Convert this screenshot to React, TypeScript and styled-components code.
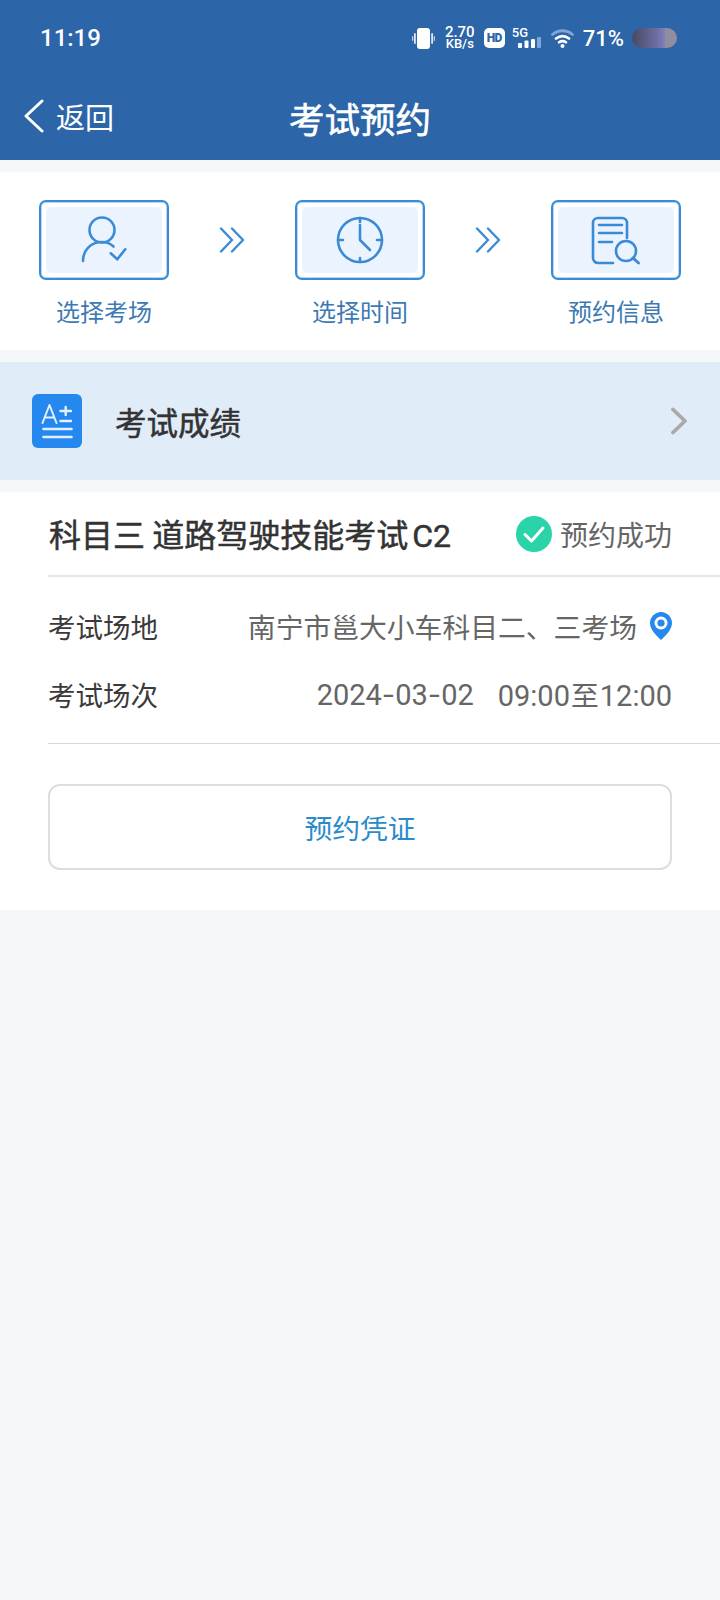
import styled, { createGlobalStyle } from 'styled-components';

const GlobalStyle = createGlobalStyle`
  html, body {
    margin: 0;
    padding: 0;
    background: #f4f8fa;
  }
  * {
    box-sizing: border-box;
  }
  body {
    font-family: "Noto Sans CJK SC", "Noto Sans", sans-serif;
  }
`;

const Page = styled.div`
  width: 720px;
  height: 1600px;
  background: #f4f8fa;
  overflow: hidden;
`;

const Header = styled.header`
  height: 160px;
  background: #2c65a8;
  color: #fff;
`;

const StatusBar = styled.div`
  height: 76px;
  padding: 0 43px 0 40px;
  display: flex;
  align-items: center;
`;

const Clock = styled.span`
  font-family: "Roboto", sans-serif;
  font-size: 24px;
  font-weight: 500;
  flex: 1;
`;

const StatusIcons = styled.div`
  display: flex;
  align-items: center;
`;

const Speed = styled.div`
  font-family: "Roboto", sans-serif;
  font-weight: 500;
  width: 30px;
  margin: 0 9px 0 10px;
  text-align: center;
  line-height: 12px;
  display: flex;
  flex-direction: column;
  align-items: center;
  white-space: nowrap;
`;

const SpeedValue = styled.span`
  font-size: 15px;
`;

const SpeedUnit = styled.span`
  font-size: 13px;
`;

const HdBadge = styled.span`
  width: 21px;
  height: 20px;
  border-radius: 5px;
  background: #fff;
  color: #2c65a8;
  font-family: "Roboto", sans-serif;
  font-size: 12px;
  font-weight: 900;
  line-height: 20px;
  text-align: center;
  letter-spacing: -0.5px;
`;

const Signal = styled.div`
  width: 29px;
  height: 20px;
  margin: 0 10px 0 7px;
  position: relative;
`;

const SignalLabel = styled.span`
  position: absolute;
  left: 0;
  top: -2px;
  font-family: "Roboto", sans-serif;
  font-size: 13px;
  font-weight: 500;
  line-height: 14px;
`;

const SignalBars = styled.svg`
  position: absolute;
  left: 0;
  bottom: 0;
`;

const Battery = styled.span`
  font-family: "Roboto", sans-serif;
  font-size: 22px;
  font-weight: 500;
  margin: 0 8px 0 9px;
`;

const BatteryBar = styled.div`
  width: 45px;
  height: 20px;
  border-radius: 10px;
  overflow: hidden;
  background: linear-gradient(90deg, #474a63 0%, #6a6a9c 50%, #7f7dbd 72%, #8f8d9e 74%);
`;

const NavBar = styled.nav`
  height: 84px;
  position: relative;
  display: flex;
  align-items: center;
  justify-content: center;
`;

const BackLink = styled.div`
  position: absolute;
  left: 24px;
  top: 22px;
  display: flex;
  align-items: center;
  gap: 12px;
  font-size: 29px;
  line-height: 36px;
`;

const NavTitle = styled.h1`
  margin: 0;
  font-size: 35.5px;
  font-weight: 400;
  line-height: 48px;
  -webkit-text-stroke: 0.6px #fff;
`;

const Steps = styled.section`
  margin-top: 12px;
  height: 178px;
  padding: 28px 39px 0;
  background: #fff;
  display: flex;
  justify-content: space-between;
`;

const Step = styled.div`
  width: 130px;
  display: flex;
  flex-direction: column;
  align-items: center;
`;

const StepFrame = styled.div`
  width: 130px;
  height: 80px;
  padding: 5px;
  border: 2px solid #3b8ad6;
  border-radius: 7px;
  box-shadow: inset 0 0 0 1px rgba(59, 138, 214, 0.35);
`;

const StepInner = styled.div`
  height: 100%;
  border-radius: 5px;
  background: #eaf3fe;
  display: flex;
  align-items: center;
  justify-content: center;
`;

const StepLabel = styled.span`
  margin-top: 14px;
  font-size: 24px;
  line-height: 34px;
  color: #3d79b3;
`;

const StepArrow = styled.div`
  height: 80px;
  display: flex;
  align-items: center;
`;

const ScoreBanner = styled.section`
  margin-top: 12px;
  height: 118px;
  padding: 0 32px;
  background: #e1ecf9;
  display: flex;
  align-items: center;
`;

const ScoreIcon = styled.div`
  width: 50px;
  height: 54px;
  border-radius: 6px;
  background: #2488ef;
  display: flex;
  align-items: center;
  justify-content: center;
`;

const ScoreTitle = styled.span`
  flex: 1;
  margin-left: 33px;
  font-size: 31.5px;
  font-weight: 400;
  color: #333;
  -webkit-text-stroke: 0.5px #333;
`;

const Card = styled.section`
  margin-top: 12px;
  height: 418px;
  padding-left: 48px;
  background: #fff;
`;

const CardHead = styled.div`
  height: 85px;
  padding-right: 48px;
  border-bottom: 2px solid #e6e6e6;
  display: flex;
  align-items: center;
  justify-content: space-between;
`;

const ExamName = styled.h2`
  margin: 0 0 2px 1px;
  font-size: 32px;
  font-weight: 400;
  color: #333;
  white-space: pre;
  -webkit-text-stroke: 0.5px #333;
`;

const ExamClass = styled.span`
  margin-left: 4px;
  font-family: "Roboto", sans-serif;
`;

const StatusTag = styled.div`
  display: flex;
  align-items: center;
  gap: 8px;
  font-size: 28px;
  color: #666;
`;

const InfoList = styled.div`
  height: 167px;
  padding: 15px 48px 0 0;
  border-bottom: 1px solid #d9d9d9;
`;

const InfoRow = styled.div`
  height: 68px;
  display: flex;
  align-items: center;
  justify-content: space-between;
`;

const InfoLabel = styled.span`
  font-size: 27.5px;
  color: #3a3a3a;
`;

const InfoValue = styled.span`
  display: flex;
  align-items: center;
  gap: 13px;
  font-size: 27.8px;
  color: #666;
  white-space: pre;
`;

const Schedule = styled.span`
  display: flex;
  align-items: center;
  gap: 24px;
  font-family: "Roboto", sans-serif;
  font-size: 29px;
  color: #666;
`;

const ScheduleTo = styled.span`
  margin: 0 1px;
  font-family: "Noto Sans CJK SC", sans-serif;
  font-size: 27.8px;
`;

const DateDash = styled.span`
  font-family: "Inter", sans-serif;
`;

const VoucherButton = styled.button`
  display: block;
  width: 624px;
  height: 86px;
  margin-top: 40px;
  border: 2px solid #dddddd;
  border-radius: 12px;
  background: #fff;
  color: #2a8bcb;
  font-family: inherit;
  font-size: 27.8px;
`;

function UserCheckIcon() {
  return (
    <svg width="52" height="52" viewBox="0 0 52 52" fill="none" stroke="#3b8ad6" strokeWidth="2.6" strokeLinecap="round" strokeLinejoin="round">
      <circle cx="24" cy="16" r="12.5" />
      <path d="M5 47c0-11 8-19 19-19 4.500 0 8.500 1.700 11.500 4.500" />
      <path d="M32.700 39.300l6.600 6 8-10" />
    </svg>
  );
}

function ClockIcon() {
  return (
    <svg width="50" height="50" viewBox="0 0 50 50" fill="none" stroke="#3b8ad6" strokeWidth="2.6" strokeLinecap="round" strokeLinejoin="round">
      <circle cx="25" cy="25" r="22" />
      <path d="M25 3v4M25 47v-4M3 25h5M47 25h-5" />
      <path d="M25 10v15l10 10" />
    </svg>
  );
}

function DocSearchIcon() {
  return (
    <svg width="50" height="52" viewBox="0 0 50 52" fill="none" stroke="#3b8ad6" strokeWidth="2.6" strokeLinecap="round" strokeLinejoin="round">
      <path d="M22 49H7a5 5 0 0 1-5-5V9a5 5 0 0 1 5-5h24a5 5 0 0 1 5 5v15" />
      <path d="M8 11h23M8 19h23M8 28h13" />
      <circle cx="35" cy="37" r="10" />
      <path d="M42 44l5.500 5" strokeWidth="3" />
    </svg>
  );
}

function DoubleArrow() {
  return (
    <svg width="26" height="26" viewBox="0 0 26 26" fill="none" stroke="#3b8ad6" strokeWidth="2.4" strokeLinecap="round" strokeLinejoin="round">
      <path d="M2 1.500L13 13 2 24.500" />
      <path d="M13 1.500L24 13 13 24.500" />
    </svg>
  );
}

function VibrateIcon() {
  return (
    <svg width="23" height="21" viewBox="0 0 23 21" fill="#fff">
      <rect x="5" y="0" width="13" height="21" rx="3" />
      <rect x="2" y="5" width="1.800" height="11" rx="0.900" opacity="0.85" />
      <rect x="19.200" y="5" width="1.800" height="11" rx="0.900" opacity="0.85" />
      <rect x="0" y="8" width="1.300" height="5" rx="0.650" opacity="0.7" />
      <rect x="21.700" y="8" width="1.300" height="5" rx="0.650" opacity="0.7" />
    </svg>
  );
}

function WifiIcon() {
  return (
    <svg width="23" height="19" viewBox="0 0 23 19" fill="none" strokeLinecap="round">
      <path d="M1.500 5.500C7.500 0.500 15.500 0.500 21.500 5.500" stroke="#7fa5d6" strokeWidth="2.800" />
      <path d="M5 9.500C9 6.500 14 6.500 18 9.500" stroke="#fff" strokeWidth="2.800" />
      <path d="M8 13.300C10.200 11.800 12.800 11.800 15 13.300" stroke="#fff" strokeWidth="2.600" />
      <circle cx="11.500" cy="17" r="2" fill="#fff" />
    </svg>
  );
}

export default function App() {
  return (
    <Page>
      <GlobalStyle />
      <Header>
        <StatusBar>
          <Clock>11:19</Clock>
          <StatusIcons>
            <VibrateIcon />
            <Speed>
              <SpeedValue>2.70</SpeedValue>
              <SpeedUnit>KB/s</SpeedUnit>
            </Speed>
            <HdBadge>HD</HdBadge>
            <Signal>
              <SignalLabel>5G</SignalLabel>
              <SignalBars width="29" height="11" viewBox="0 0 29 11">
                <rect x="6" y="6" width="4" height="5" rx="1" fill="#fff" />
                <rect x="12.500" y="3.500" width="4" height="7.500" rx="1" fill="#fff" />
                <rect x="19" y="2" width="4" height="9" rx="1" fill="#fff" />
                <rect x="25" y="0" width="4" height="11" rx="1" fill="#7fa5d6" />
              </SignalBars>
            </Signal>
            <WifiIcon />
            <Battery>71%</Battery>
            <BatteryBar />
          </StatusIcons>
        </StatusBar>
        <NavBar>
          <BackLink>
            <svg width="20" height="34" viewBox="0 0 20 34" fill="none" stroke="#fff" strokeWidth="3" strokeLinecap="round" strokeLinejoin="round">
              <path d="M18 2L2 17l16 15" />
            </svg>
            <span>返回</span>
          </BackLink>
          <NavTitle>考试预约</NavTitle>
        </NavBar>
      </Header>

      <Steps>
        <Step>
          <StepFrame>
            <StepInner>
              <UserCheckIcon />
            </StepInner>
          </StepFrame>
          <StepLabel>选择考场</StepLabel>
        </Step>
        <StepArrow>
          <DoubleArrow />
        </StepArrow>
        <Step>
          <StepFrame>
            <StepInner>
              <ClockIcon />
            </StepInner>
          </StepFrame>
          <StepLabel>选择时间</StepLabel>
        </Step>
        <StepArrow>
          <DoubleArrow />
        </StepArrow>
        <Step>
          <StepFrame>
            <StepInner>
              <DocSearchIcon />
            </StepInner>
          </StepFrame>
          <StepLabel>预约信息</StepLabel>
        </Step>
      </Steps>

      <ScoreBanner>
        <ScoreIcon>
          <svg width="32" height="36" viewBox="0 0 32 36" fill="none" stroke="#e4f0ff" strokeWidth="2.600" strokeLinecap="round" strokeLinejoin="round">
            <path d="M1.500 20L8.500 2l7 18M4 14.500h9" strokeWidth="2" />
            <path d="M24.700 4v8M19.500 8h10.500M19.500 18h10.500" strokeWidth="2.400" />
            <path d="M2.500 26h28M2.500 34h28" />
          </svg>
        </ScoreIcon>
        <ScoreTitle>考试成绩</ScoreTitle>
        <svg width="18" height="28" viewBox="0 0 18 28" fill="none" stroke="#a9a9a9" strokeWidth="3.800" strokeLinecap="round" strokeLinejoin="round">
          <path d="M3 2.500L15 14 3 25.500" />
        </svg>
      </ScoreBanner>

      <Card>
        <CardHead>
          <ExamName>
            科目三 道路驾驶技能考试
            <ExamClass>C2</ExamClass>
          </ExamName>
          <StatusTag>
            <svg width="36" height="36" viewBox="0 0 36 36">
              <circle cx="18" cy="18" r="18" fill="#2bd4a8" />
              <path d="M9 18.500l6.500 6.500L27 12" fill="none" stroke="#fff" strokeWidth="3" strokeLinecap="round" strokeLinejoin="round" />
            </svg>
            <span>预约成功</span>
          </StatusTag>
        </CardHead>
        <InfoList>
          <InfoRow>
            <InfoLabel>考试场地</InfoLabel>
            <InfoValue>
              南宁市邕大小车科目二、三考场
              <svg width="22" height="28" viewBox="0 0 22 28">
                <path fill="#2488ef" d="M11 0C5 0 0 5 0 11c0 6.300 6 12.500 11 17 5-4.500 11-10.700 11-17C22 5 17 0 11 0z" />
                <circle cx="11" cy="11" r="6.500" fill="#fff" />
                <circle cx="11" cy="11" r="3.600" fill="#2488ef" />
              </svg>
            </InfoValue>
          </InfoRow>
          <InfoRow>
            <InfoLabel>考试场次</InfoLabel>
            <Schedule>
              <span>
                2024<DateDash>-</DateDash>03<DateDash>-</DateDash>02
              </span>
              <span>
                09:00<ScheduleTo>至</ScheduleTo>12:00
              </span>
            </Schedule>
          </InfoRow>
        </InfoList>
        <VoucherButton>预约凭证</VoucherButton>
      </Card>
    </Page>
  );
}
